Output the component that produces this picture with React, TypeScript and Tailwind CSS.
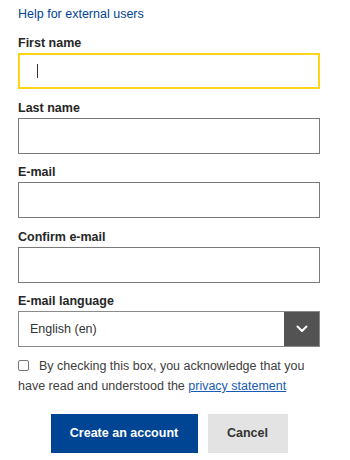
import React from "react";

function Label({ children }: { children: React.ReactNode }) {
  return (
    <div className="text-[12.5px] leading-[20px] font-bold text-[#262626]">{children}</div>
  );
}

function TextInput() {
  return <div className="h-[36px] w-[302px] border border-[#7a7a7a] bg-white" />;
}

export default function App() {
  return (
    <div className="w-[350px] h-[460px] bg-white pt-[4px] pl-[18px] font-['Liberation_Sans',Arial,sans-serif] text-[12.5px] text-[#404040] overflow-hidden">
      <div className="leading-[20px]">
        <a className="text-[#004494]" href="#">Help for external users</a>
      </div>

      <div className="mt-[9px]">
        <Label>First name</Label>
        <div className="h-[36px] w-[302px] border-2 border-[#ffd617] bg-white flex items-center pl-[17px]">
          <span className="block w-px h-[14px] bg-[#333]" />
        </div>
      </div>

      <div className="mt-[8.5px]">
        <Label>Last name</Label>
        <TextInput />
      </div>

      <div className="mt-[8.5px]">
        <Label>E-mail</Label>
        <TextInput />
      </div>

      <div className="mt-[8.5px]">
        <Label>Confirm e-mail</Label>
        <TextInput />
      </div>

      <div className="mt-[8.5px]">
        <Label>E-mail language</Label>
        <div className="h-[36px] w-[302px] border border-[#8a8a8a] bg-white flex">
          <div className="flex-1 flex items-center pl-[11px] text-[#333]">English (en)</div>
          <div className="w-[35px] h-full bg-[#535353] flex items-center justify-center">
            <svg width="12" height="8" viewBox="0 0 12 8" fill="none">
              <polyline points="1.5,1.5 6,6 10.5,1.5" stroke="white" strokeWidth="2" strokeLinecap="round" strokeLinejoin="round" />
            </svg>
          </div>
        </div>
      </div>

      <p className="mt-[9px] w-[302px] leading-[20px] text-[#404040]">
        <span className="inline-block align-[-1px] w-[11px] h-[11px] border border-[#767676] rounded-[2px] bg-white mr-[10px]" />
        By checking this box, you acknowledge that you have read and understood the{" "}
        <a href="#" className="text-[#1a5bb5] underline">privacy statement</a>
      </p>

      <div className="mt-[18px] w-[302px] flex justify-center gap-[10px]">
        <button className="h-[39px] w-[147px] bg-[#004494] text-white font-bold text-[12.5px]">
          Create an account
        </button>
        <button className="h-[39px] w-[80px] bg-[#e3e3e3] text-[#333] font-bold text-[12.5px]">
          Cancel
        </button>
      </div>
    </div>
  );
}
